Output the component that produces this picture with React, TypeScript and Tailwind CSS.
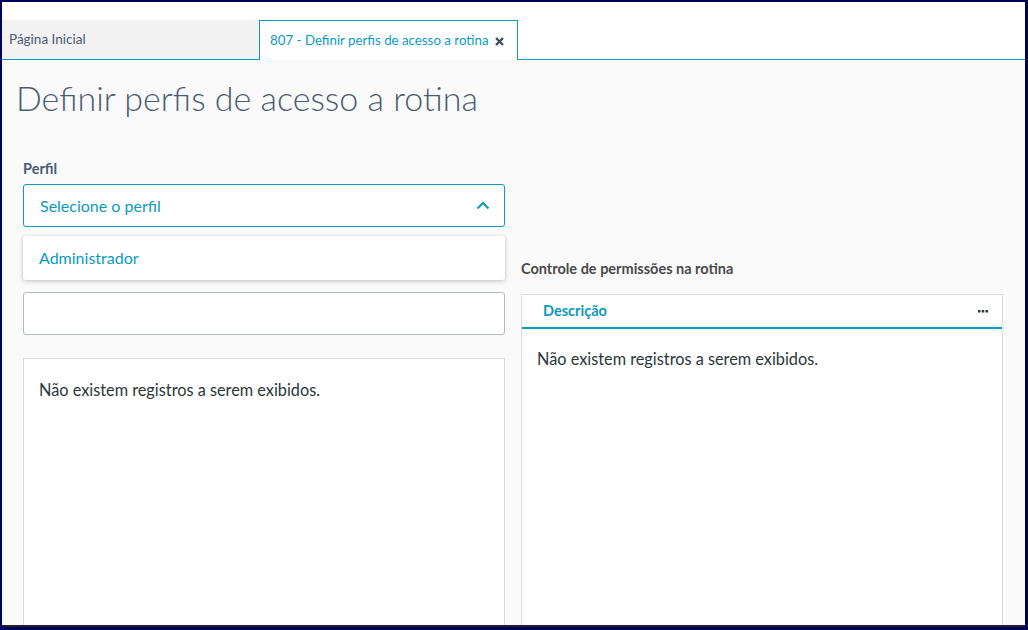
const font = { fontFamily: '"Lato", "Open Sans", sans-serif' };

function EmptyText() {
    return (
        <p className="text-[16.3px] text-[#2c3739] leading-[20px]">
            Não existem registros a serem exibidos.
        </p>
    );
}

export default function App() {
    return (
        <div
            className="w-[1028px] h-[630px] overflow-hidden border-t-2 border-l-2 border-r-[3px] border-b-[3px] border-[#00005a] bg-white flex flex-col"
            style={font}
        >
            {/* top spacer */}
            <div className="h-[18px] bg-white shrink-0" />

            {/* tabs */}
            <div className="flex h-[40px] shrink-0">
                <div className="w-[257px] bg-[#f2f2f2] border-b border-[#0c9abe] flex items-center pl-[7px] text-[13.5px] text-[#4a5c73] whitespace-nowrap">
                    Página Inicial
                </div>
                <div className="w-[259px] bg-white border border-b-0 border-[#0c9abe] flex items-center pl-[10px] gap-[6px] text-[13.3px] text-[#0c9abe] whitespace-nowrap">
                    807 - Definir perfis de acesso a rotina
                    <svg width="9" height="9" viewBox="0 0 9 9" className="mt-[2px]">
                        <path d="M1 1 L8 8 M8 1 L1 8" stroke="#3f4d5c" strokeWidth="2.4" />
                    </svg>
                </div>
                <div className="flex-1 border-b border-[#0c9abe]" />
            </div>

            {/* content */}
            <div className="flex-1 bg-[#fafafa] flex flex-col min-h-0">
                <h1 className="text-[34px] font-light text-[#4a5c73] pl-[14px] pt-[18px] leading-[40px] whitespace-nowrap">
                    Definir perfis de acesso a rotina
                </h1>

                <div className="flex gap-[16px] pl-[21px] pt-[41px] flex-1 min-h-0">
                    {/* left column */}
                    <div className="w-[482px] flex flex-col">
                        <label className="text-[14.5px] font-bold text-[#4a5c73] leading-[20px]">Perfil</label>
                        <div className="mt-[5px] h-[43px] bg-white border border-[#0c9abe] rounded-[3px] flex items-center justify-between pl-[16px] pr-[14px]">
                            <span className="text-[16px] text-[#0c9abe]">Selecione o perfil</span>
                            <svg width="14" height="9" viewBox="0 0 14 9" fill="none">
                                <path d="M1.5 7.5 L7 2 L12.5 7.5" stroke="#0c9abe" strokeWidth="2" />
                            </svg>
                        </div>
                        <div className="mt-[9px] h-[44px] bg-white rounded-[3px] shadow-[0_1px_4px_rgba(0,0,0,0.25)] flex items-center pl-[16px]">
                            <span className="text-[16px] text-[#0c9abe]">Administrador</span>
                        </div>
                        <div className="mt-[12px] h-[43px] bg-white border border-[#b5bcbe] rounded-[3px]" />
                        <div className="mt-[23px] flex-1 bg-white border border-[#dcdcdc] border-b-0 pl-[15px] pt-[21px]">
                            <EmptyText />
                        </div>
                    </div>

                    {/* right column */}
                    <div className="w-[482px] flex flex-col pt-[100px]">
                        <h2 className="text-[14.5px] font-bold text-[#4a4a4a] leading-[20px] whitespace-nowrap">
                            Controle de permissões na rotina
                        </h2>
                        <div className="mt-[15px] flex-1 bg-white border border-[#dcdcdc] border-b-0 flex flex-col">
                            <div className="h-[34px] border-b-2 border-[#0c9abe] flex items-center justify-between pl-[21px] pr-[14px]">
                                <span className="text-[14.5px] font-bold text-[#0c9abe]">Descrição</span>
                                <svg width="10" height="3" viewBox="0 0 10 3">
                                    <rect x="0" y="0" width="2.5" height="2.5" fill="#2c3739" />
                                    <rect x="3.75" y="0" width="2.5" height="2.5" fill="#2c3739" />
                                    <rect x="7.5" y="0" width="2.5" height="2.5" fill="#2c3739" />
                                </svg>
                            </div>
                            <div className="pl-[15px] pt-[20px]">
                                <EmptyText />
                            </div>
                        </div>
                    </div>
                </div>
            </div>
            <div className="h-[2px] bg-[#1f1f1f] shrink-0" />
        </div>
    );
}
